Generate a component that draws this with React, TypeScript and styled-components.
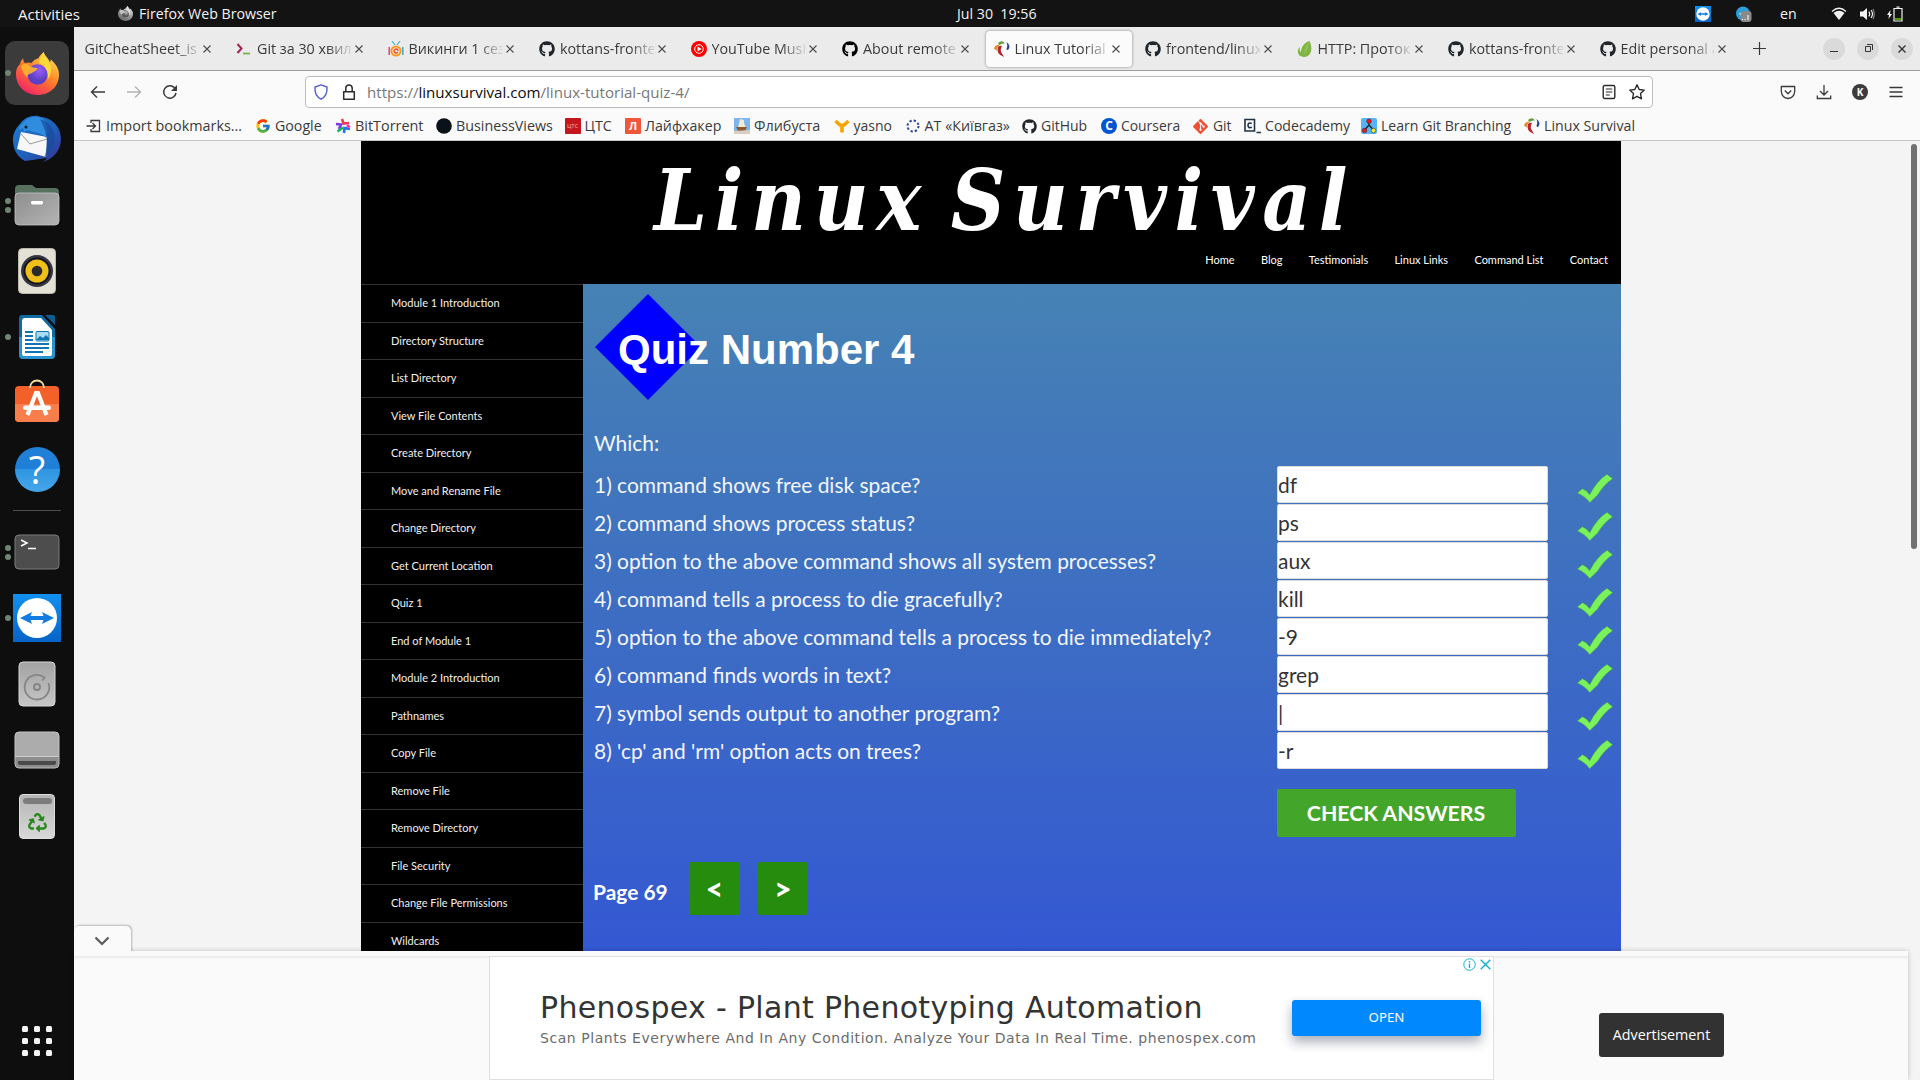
import React from 'react';
import styled, { createGlobalStyle, css } from 'styled-components';
import { FaGithub, FaGitAlt, FaRecycle } from 'react-icons/fa';
import { FcGoogle } from 'react-icons/fc';

const UI = `"Open Sans", "Noto Sans", sans-serif`;
const LATO = `Lato, "Noto Sans", sans-serif`;

const Global = createGlobalStyle`
  * { box-sizing: border-box; }
  html, body { margin: 0; padding: 0; background: #0e0e0e; overflow: hidden; }
  svg { display: block; flex: none; }
  button, input { font: inherit; }
`;

/* ---------- desktop shell ---------- */
const Screen = styled.div`
  width: 1920px;
  height: 1080px;
  display: flex;
  flex-direction: column;
  overflow: hidden;
  font-family: ${UI};
`;
const TopBar = styled.header`
  height: 27px;
  flex: none;
  display: flex;
  align-items: center;
  padding: 0 17px 0 18px;
  background: #131313;
  color: #f2f2f2;
  font-size: 14.2px;
  line-height: 26px;
  white-space: pre;
`;
const Activities = styled.span`
  width: 100px;
  font-size: 15px;
`;
const AppName = styled.span`
  width: 824px;
  padding-left: 6px;
`;
const Tray = styled.div`
  margin-left: auto;
  display: flex;
  align-items: center;
`;
const TrayItem = styled.span<{ $gap?: number; $w: number }>`
  margin-left: ${p => p.$gap ?? 0}px;
  width: ${p => p.$w}px;
`;
const Desktop = styled.div`
  flex: 1;
  min-height: 0;
  display: flex;
`;

/* ---------- dock ---------- */
const Dock = styled.nav`
  width: 74px;
  flex: none;
  background: #0e0e0e;
  display: flex;
  flex-direction: column;
  align-items: center;
  gap: 2px;
  padding: 14px 0 7px;
`;
const DockItem = styled.div<{ $active?: boolean }>`
  position: relative;
  width: 64px;
  height: 64px;
  flex: none;
  display: flex;
  align-items: center;
  justify-content: center;
  border-radius: 10px;
  background: ${p => (p.$active ? '#3b3b3b' : 'transparent')};
`;
const Dots = styled.span`
  position: absolute;
  left: 0;
  top: 0;
  height: 64px;
  display: flex;
  flex-direction: column;
  justify-content: center;
  gap: 3px;
`;
const Dot = styled.i`
  width: 6px;
  height: 6px;
  border-radius: 3px;
  background: #6f8573;
`;
const DockRule = styled.hr`
  width: 48px;
  height: 1px;
  flex: none;
  margin: 7px 0;
  border: 0;
  background: #4d4d4d;
`;
const AppsGrid = styled.div`
  margin: auto 0 17px;
  display: grid;
  grid-template-columns: repeat(3, 6px);
  gap: 6px;
`;
const AppsCell = styled.i`
  height: 6px;
  border-radius: 1.5px;
  background: #f4f4f4;
`;

/* ---------- browser chrome ---------- */
const Browser = styled.div`
  flex: 1;
  min-width: 0;
  display: flex;
  flex-direction: column;
  background: #fafafa;
  color: #3a3a3c;
`;
const TabStrip = styled.div`
  height: 44px;
  flex: none;
  display: flex;
  align-items: center;
  background: #ebebeb;
  border-bottom: 1px solid #9d9da0;
`;
const Tab = styled.div<{ $active?: boolean }>`
  width: 146.5px;
  height: 36px;
  margin: 0 2.5px;
  padding: 0 8px 0 8px;
  flex: none;
  display: flex;
  align-items: center;
  border-radius: 4px;
  ${p => p.$active && css`
    background: #fbfbfb;
    box-shadow: 0 0 3px rgba(0, 0, 0, 0.45);
  `}
`;
const TabIcon = styled.span`
  width: 21px;
  flex: none;
`;
const TabLabel = styled.span`
  flex: 1;
  min-width: 0;
  overflow: hidden;
  white-space: nowrap;
  font-size: 14.3px;
  line-height: 22px;
  mask-image: linear-gradient(to right, #000 calc(100% - 24px), rgba(0, 0, 0, 0.12));
`;
const TabClose = styled.span`
  width: 16px;
  flex: none;
  display: flex;
  justify-content: center;
`;
const NewTab = styled.span`
  margin-left: 12.5px;
`;
const WindowButtons = styled.div`
  margin-left: auto;
  padding-right: 7px;
  display: flex;
  gap: 12px;
`;
const WindowButton = styled.span`
  width: 22px;
  height: 22px;
  border-radius: 50%;
  background: #dadada;
  display: flex;
  align-items: center;
  justify-content: center;
`;
const NavBar = styled.div`
  height: 41px;
  flex: none;
  display: flex;
  align-items: center;
  padding: 0 6px;
`;
const Slot = styled.span<{ $w?: number }>`
  width: ${p => p.$w ?? 36}px;
  flex: none;
  display: flex;
  align-items: center;
  justify-content: center;
`;
const UrlBar = styled.div`
  width: 1348px;
  height: 32px;
  margin: 0 auto 0 117px;
  padding: 0 1px;
  display: flex;
  align-items: center;
  background: #fff;
  border: 1px solid #bcbcbe;
  border-radius: 4px;
`;
const Url = styled.span`
  flex: 1;
  padding-left: 4px;
  font-size: 15.1px;
  line-height: 24px;
  color: #77777a;
  b { font-weight: 400; color: #0c0c0d; }
`;
const Avatar = styled.span`
  width: 16px;
  height: 16px;
  border-radius: 8px;
  background: #3c3c3e;
  color: #fff;
  font: 700 10px/16px ${UI};
  text-align: center;
`;
const BookmarkBar = styled.div`
  height: 29px;
  flex: none;
  display: flex;
  align-items: center;
  padding-left: 12px;
  border-bottom: 1px solid #c6c6c8;
`;
const Bookmark = styled.span<{ $w: number; $fs?: number }>`
  width: ${p => p.$w}px;
  flex: none;
  display: flex;
  align-items: center;
  gap: 4px;
  font-size: ${p => p.$fs ?? 14.2}px;
  line-height: 22px;
  white-space: nowrap;
`;

/* ---------- viewport ---------- */
const Viewport = styled.div`
  flex: 1;
  min-height: 0;
  display: flex;
  background: #f4f4f4;
`;
const Column = styled.div`
  width: 1834px;
  display: flex;
  flex-direction: column;
`;
const ScrollTrack = styled.div`
  flex: 1;
  padding: 3px 3px 0;
`;
const ScrollThumb = styled.div`
  height: 405px;
  border-radius: 3px;
  background: #71716f;
`;
const Page = styled.div`
  height: 810px;
  width: 1260px;
  margin-left: 287px;
  overflow: hidden;
  display: flex;
  flex-direction: column;
`;
const SiteHeader = styled.div`
  height: 143px;
  flex: none;
  background: #000;
  color: #fff;
  padding-top: 18px;
`;
const SiteTitle = styled.h1`
  margin: 0 0 7px;
  padding-left: 293px;
  font: italic 700 84px/84px "DejaVu Serif Condensed", "DejaVu Serif", serif;
  font-stretch: condensed;
  letter-spacing: 7.6px;
  word-spacing: -12px;
  white-space: nowrap;
`;
const SiteNav = styled.div`
  display: flex;
  justify-content: flex-end;
  gap: 26.3px;
  padding-right: 13px;
  font: 400 11px/20px ${LATO};
`;
const SiteBody = styled.div`
  flex: 1;
  min-height: 0;
  display: flex;
`;
const SideMenu = styled.div`
  width: 222px;
  flex: none;
  overflow: hidden;
  background: #000;
  display: flex;
  flex-direction: column;
`;
const MenuItem = styled.a`
  height: 37.5px;
  flex: none;
  padding-left: 30px;
  border-top: 1px solid #333;
  color: #f0f0f0;
  font: 400 11px/35px ${LATO};
`;
const Quiz = styled.main`
  flex: 1;
  padding: 10px 0 0 12px;
  background: linear-gradient(#4682b4, #3458d2);
  color: #f3f6fb;
  font: 400 20.95px/28px ${LATO};
`;
const Heading = styled.div`
  display: grid;
  align-items: center;
  justify-items: start;
  > * { grid-area: 1 / 1; }
`;
const HeadingText = styled.h2`
  margin: 0;
  padding: 5px 0 0 23px;
  color: #fff;
  font: 700 42px/50px "Liberation Sans", Arial, sans-serif;
  z-index: 1;
`;
const Lead = styled.p`
  margin: 28.5px 0 9.5px -1px;
`;
const Question = styled.div`
  height: 38px;
  margin-left: -1px;
  display: grid;
  grid-template-columns: 683px 271px 36px;
  line-height: 37px;
  > svg { margin: 7.5px 0 0 29px; }
`;
const Answer = styled.input`
  width: 271px;
  height: 37px;
  padding: 0;
  border: 1px solid #dcdcdc;
  border-radius: 2px;
  background: #fff;
  color: #333;
  outline: 0;
`;
const CheckButton = styled.button`
  display: block;
  width: 239px;
  height: 48px;
  margin: 19px 0 25px 682px;
  padding: 0 1px 0 0;
  border: 0;
  border-radius: 2px;
  background: #43a52a;
  color: #fff;
  font: 700 21.3px/48px ${LATO};
`;
const Pager = styled.div`
  display: flex;
  align-items: center;
`;
const PageLabel = styled.span`
  width: 96px;
  padding-top: 6px;
  margin-left: -2px;
  color: #fff;
  font-weight: 700;
`;
const PageButton = styled.button<{ $w: number }>`
  width: ${p => p.$w}px;
  height: 53px;
  margin-right: 18px;
  padding: 0 0 1px;
  border: 0;
  border-radius: 2px;
  background: #268c0e;
  color: #fff;
  font: 900 30px/52px ${LATO};
`;

/* ---------- anchor ad ---------- */
const AdStrip = styled.div`
  position: relative;
  height: 129px;
  padding-top: 5px;
  background: #fafafa;
  box-shadow: 0 0 5px rgba(0, 0, 0, 0.22);
`;
const CollapseTab = styled.span`
  position: absolute;
  left: 0;
  top: -25px;
  width: 57px;
  height: 26px;
  display: flex;
  align-items: center;
  justify-content: center;
  padding: 4px 2px 0 0;
  background: #fafafa;
  border-radius: 5px 5px 0 0;
  box-shadow: 1px -1px 2px rgba(0, 0, 0, 0.25);
  clip-path: inset(-4px -5px 1px 0);
`;
const AdRow = styled.div`
  height: 124px;
  display: flex;
  border-top: 1px solid #ececec;
  box-shadow: inset 0 2px 2px -1px rgba(0, 0, 0, 0.06);
`;
const AdCard = styled.div`
  width: 1005px;
  height: 124px;
  margin: -1px 0 0 415px;
  flex: none;
  display: flex;
  background: #fff;
  border: 1px solid #dfe1e1;
`;
const AdCopy = styled.div`
  width: 802px;
  flex: none;
  padding: 33px 0 0 50px;
  white-space: nowrap;
  font-family: "DejaVu Sans", Verdana, sans-serif;
`;
const AdTitle = styled.div`
  font-size: 30px;
  line-height: 36px;
  letter-spacing: 0.31px;
  color: #333;
`;
const AdText = styled.div`
  margin-top: 2px;
  font-size: 14px;
  line-height: 20px;
  letter-spacing: 0.55px;
  color: #6c6c6c;
`;
const AdSide = styled.div`
  flex: 1;
  display: flex;
  flex-direction: column;
  align-items: flex-start;
`;
const AdMarks = styled.div`
  align-self: flex-end;
  display: flex;
  align-items: center;
  gap: 4px;
  padding: 1px 2px 0 0;
`;
const AdButton = styled.button`
  width: 189px;
  height: 36px;
  margin-top: 29px;
  padding: 0 0 2px;
  border: 0;
  border-radius: 3px;
  background: #08f;
  color: #fff;
  font: 400 13.3px/34px "Noto Sans", sans-serif;
  box-shadow: 0 6px 12px rgba(20, 30, 60, 0.36);
`;
const AdNotice = styled.span`
  width: 125px;
  height: 44px;
  margin: 56px 0 0 105px;
  border-radius: 3px;
  background: #323232;
  color: #fff;
  font-size: 14.3px;
  line-height: 43px;
  text-align: center;
`;

/* ---------- icons ---------- */
const Firefox = ({ size, mono = false }: { size: number; mono?: boolean }) => {
  const id = mono ? 'fm' : 'fc';
  const c = mono ? ['#eee', '#999', '#666', '#bbb', '#555'] : ['#ffe14a', '#ff7a2a', '#f0206a', '#9a5cff', '#5b3fc4'];
  return (
    <svg width={size} height={size} viewBox="0 0 42 42">
      <defs>
        <linearGradient id={id} x1=".85" y1=".05" x2=".25" y2="1">
          <stop offset="0" stopColor={c[0]} /><stop offset=".5" stopColor={c[1]} /><stop offset="1" stopColor={c[2]} />
        </linearGradient>
        <radialGradient id={id + 'r'} cx=".6" cy=".3"><stop offset="0" stopColor={c[3]} /><stop offset="1" stopColor={c[4]} /></radialGradient>
      </defs>
      <path fill={`url(#${id})`} d="M27 0c1 4 5 6 6 10 1-1 1-2 1-3 5 5 8 9 8 15 0 12-9 20-21 20S0 33 0 22c0-4 1-8 4-10 0-2 1-4 3-6 0 3 1 4 2 5 2-1 4-1 6 0 2-3 4-4 7-5 1-2 3-4 5-6z" />
      <circle cx="21" cy="22" r="10" fill={`url(#${id}r)`} />
      <path fill={mono ? '#ccc' : '#ffb52e'} d="M5 14c2-3 4-3 6-2 2 3 7 3 10 4-1 3-5 3-6 5-2 0-4 1-4 4-3-3-5-6-6-11z" opacity=".9" />
      <path fill={mono ? '#ddd' : '#ffd83a'} d="M27 0c1 5 6 8 7 15 1 5-1 9-3 12 1-9-3-14-8-16-1-4 2-7 4-11z" />
    </svg>
  );
};
const Thunderbird = () => (
  <svg width="48" height="48" viewBox="0 0 48 48">
    <defs><linearGradient id="tb" x1="0" y1="0" x2="1" y2="1"><stop offset="0" stopColor="#1d7fd6" /><stop offset=".6" stopColor="#1f5cb8" /><stop offset="1" stopColor="#3a2f8f" /></linearGradient></defs>
    <path fill="url(#tb)" d="M7 9C12 1 22-1 28 2c12 1 20 11 20 22 0 12-9 21-19 23 2-1 4-2 5-4L12 46C4 42 0 34 0 25c0-7 3-12 7-16z" />
    <path fill="#f7f7f7" d="M8 17l26 5-1 20L4 34z" />
    <path fill="none" stroke="#9a9a9a" d="M8 19l9 10 17-5" />
    <path fill="#2f8de0" d="M9 9c6-8 15-8 20-6 5 4 6 12 4 20-4-5-10-5-15-7-3-1-6-1-8 2 2-5 0-6-4-3 0-3 1-5 3-6z" />
    <path fill="#174a96" d="M27 4c9 3 15 10 15 20-2 9-5 15-11 19 4-10 5-22-4-39z" opacity=".65" />
    <circle cx="13" cy="12" r="1.6" fill="#123" />
  </svg>
);
const Files = () => (
  <svg width="46" height="42" viewBox="0 0 46 42">
    <defs><linearGradient id="fl" x1="0" y1="0" x2="1" y2="1"><stop offset="0" stopColor="#8e8e8e" /><stop offset="1" stopColor="#b4b4b4" /></linearGradient></defs>
    <path fill="#587060" d="M1 5q0-4 4-4h13l4 3h19q4 0 4 4v10H1z" />
    <rect x="1" y="9" width="44" height="32" rx="4" fill="url(#fl)" stroke="#c5c5c5" strokeWidth=".8" />
    <rect x="17" y="17" width="12" height="3.4" rx="1.4" fill="#fff" />
  </svg>
);
const Rhythmbox = () => (
  <svg width="38" height="46" viewBox="0 0 38 46">
    <rect x=".5" y=".5" width="37" height="45" rx="4" fill="#e3e0d6" stroke="#bdb9ac" />
    <circle cx="19" cy="23" r="16" fill="#35353f" /><circle cx="19" cy="23" r="13.500" fill="#15151c" />
    <circle cx="19" cy="23" r="11.500" fill="#f0bf18" /><circle cx="19" cy="23" r="5.300" fill="#2b2b2b" />
  </svg>
);
const Writer = () => (
  <svg width="38" height="46" viewBox="0 0 38 46">
    <path fill="#0c6ba1" d="M4 1h20l13 14v26q0 4-4 4H5q-4 0-4-4V4q0-3 3-3z" />
    <path fill="#2793cf" d="M1 23h36v18q0 4-4 4H5q-4 0-4-4z" />
    <path fill="#fff" d="M7 4h16l11 12v24q0 2-2 2H6q-2 0-2-2V7q0-3 3-3z" />
    <path fill="#0b5f93" d="M27 1h8q2 0 2 2v8z" />
    <path stroke="#0f76b3" strokeWidth="2" d="M7 18h8M7 22h8M7 26h8M7 30h24M7 34h24M7 38h18" />
    <rect x="18" y="17.500" width="13" height="9.500" rx="1" fill="#a9dcf2" stroke="#0f76b3" />
    <path fill="#0f76b3" d="M18 26l4-4 3 2 3-3 3 3v2z" />
  </svg>
);
const Software = () => (
  <svg width="46" height="48" viewBox="0 0 46 48">
    <rect x="1" y="7" width="44" height="36" rx="4" fill="#f4602a" />
    <path fill="#f87e4c" d="M1 25h44v14q0 4-4 4H5q-4 0-4-4z" />
    <path fill="none" stroke="#f7dba4" strokeWidth="1.800" d="M16 9c0-10 14-10 14 0" />
    <path fill="none" stroke="#fff" strokeWidth="4.200" d="M13.500 36L22 14h2l8.500 22" />
    <rect x="9" y="26.500" width="28" height="4.500" rx="2.200" fill="#fff" />
  </svg>
);
const HelpBadge = styled.span`
  width: 45px;
  height: 45px;
  border-radius: 50%;
  background: linear-gradient(#2080d8 0 50%, #2f95e2 50%, #46a6ea);
  color: #fff;
  font: 400 38px/44px ${UI};
  text-align: center;
`;
const TerminalIcon = () => (
  <svg width="46" height="37" viewBox="0 0 46 37">
    <rect x="1" y="1" width="44" height="34" rx="4" fill="#4d4d4d" stroke="#7d7d7d" />
    <path fill="none" stroke="#fff" strokeWidth="1.500" d="M7 6l6 3-6 3M14 14.500h8" />
  </svg>
);
const TeamViewer = ({ size }: { size: number }) => (
  <svg width={size} height={size} viewBox="0 0 48 48">
    <defs><linearGradient id={'tv' + size} x2="0" y2="1"><stop stopColor="#1191f0" /><stop offset="1" stopColor="#0663c7" /></linearGradient></defs>
    <rect width="48" height="48" fill={`url(#tv${size})`} />
    <circle cx="24" cy="24" r="20" fill="#fff" />
    <path fill="#0f7ee0" d="M7 24l12-6-1.500 4h13L29 18l12 6-12 6 1.500-4h-13L19 30z" />
  </svg>
);
const HardDisk = () => (
  <svg width="38" height="46" viewBox="0 0 38 46">
    <defs><linearGradient id="hd" x2="0" y2="1"><stop stopColor="#a2a2a2" /><stop offset="1" stopColor="#c6c6c6" /></linearGradient></defs>
    <rect x="1" y="1" width="36" height="44" rx="4" fill="url(#hd)" stroke="#d5d5d5" />
    <path fill="none" stroke="#858585" strokeWidth="1.800" d="M30.500 22a12.300 12.300 0 1 1-4-5.500l-2 3" />
    <circle cx="19" cy="26" r="3" fill="none" stroke="#858585" strokeWidth="2" />
  </svg>
);
const Drive = () => (
  <svg width="46" height="38" viewBox="0 0 46 38">
    <rect x="1" y="1" width="44" height="36" rx="4" fill="#acacac" stroke="#c4c4c4" />
    <path fill="#8d8d8d" d="M1.500 26h43v7q0 3.500-3.500 3.500H5Q1.500 36.500 1.500 33z" />
    <path stroke="#ccc" d="M1.500 25.500h43" />
    <path fill="#4a4a4a" d="M4 30h38v2q0 2-2 2H6q-2 0-2-2z" />
  </svg>
);
const TrashCan = styled.span`
  width: 36px;
  height: 45px;
  border-radius: 4px;
  border: 1px solid #ddd;
  background: linear-gradient(#b5b5b5, #d8d8d8);
  display: flex;
  flex-direction: column;
  align-items: center;
  gap: 9px;
  padding-top: 3px;
  color: #26891a;
`;
const TrashSlot = styled.i`
  width: 29px;
  height: 6px;
  border-radius: 3px;
  background: #7c7c7c;
`;
const Telegram = () => (
  <svg width="16" height="16" viewBox="0 0 16 16">
    <circle cx="7" cy="7.500" r="7" fill="#2a9fd8" /><path fill="#fff" d="M3 7.500l5-2-2 5z" />
    <rect x="4.500" y="5" width="11" height="11" rx="3" fill="#8a8a8a" />
    <path stroke="#fff" d="M6 13.500h1M8.500 13.500h1M12 9v5" />
  </svg>
);
const Wifi = () => (
  <svg width="16" height="14" viewBox="0 0 16 14">
    <path fill="none" stroke="#f2f2f2" strokeWidth="1.200" d="M1 4.500Q8-2 15 4.500" />
    <path fill="#f2f2f2" d="M2.500 6Q8 1.500 13.500 6L8 13z" />
  </svg>
);
const Volume = () => (
  <svg width="16" height="14" viewBox="0 0 16 14">
    <path fill="#f2f2f2" d="M1 4.500h3L8 1v12L4 9.500H1z" />
    <path fill="none" stroke="#f2f2f2" strokeWidth="1.200" d="M9.800 4.500q1.800 2.500 0 5M12 3q3 4 0 8" />
    <path fill="none" stroke="#888" strokeWidth="1.200" d="M14 2q2.500 5 0 10" />
  </svg>
);
const Battery = () => (
  <svg width="16" height="16" viewBox="0 0 16 16">
    <path fill="#f2f2f2" d="M3.500 4L0 9h2l-.5 4L5 8H3z" />
    <path fill="none" stroke="#f2f2f2" strokeWidth="1.200" d="M7 2.500h8v12.500H7zM9.500 1.200h3" />
    <path fill="#4e9a06" d="M8 12h6v2.200H8z" />
  </svg>
);
const Cross = ({ size = 8, color = '#4a4a4c', w = 1.1 }: { size?: number; color?: string; w?: number }) => (
  <svg width={size} height={size} viewBox="0 0 8 8"><path stroke={color} strokeWidth={w} d="M.5.5l7 7M7.500.5l-7 7" /></svg>
);
const Prompt = () => (
  <svg width="16" height="16" viewBox="0 0 16 16"><path fill="none" stroke="#a5244c" strokeWidth="2" d="M1.500 3l4 4.500-4 4.500" /><path stroke="#7bb342" strokeWidth="1.800" d="M7 12.500h7" /></svg>
);
const Viking = () => (
  <svg width="16" height="16" viewBox="0 0 16 16">
    <path stroke="#35b7d8" strokeWidth="1.200" d="M4 0l3 4M12 0L9 4" />
    <path fill="none" stroke="#e83e8c" strokeWidth="1.500" d="M1.200 6v8" /><path fill="none" stroke="#35a7e0" strokeWidth="1.500" d="M14.800 6v8" />
    <circle cx="8" cy="10" r="4.600" fill="none" stroke="#f79a1c" strokeWidth="2" />
    <path fill="none" stroke="#f0501f" strokeWidth="1.400" d="M10 11q-2 2-3.500 0t1.500-3q2 0 2 2" />
  </svg>
);
const YouTubeMusic = () => (
  <svg width="16" height="16" viewBox="0 0 16 16"><circle cx="8" cy="8" r="8" fill="#f00" /><circle cx="8" cy="8" r="4.300" fill="none" stroke="#fff" /><path fill="#fff" d="M6.500 5.500L10.700 8l-4.200 2.500z" /></svg>
);
const Palm = () => (
  <svg width="16" height="16" viewBox="0 0 16 16">
    <path fill="#e08a2c" d="M0 7.500Q1 3.500 6 3.500 3 5.500 2.500 9.500z" />
    <path fill="#5f9f3a" d="M4 2Q8-1.500 11 2.500 7 2 5.500 4z" />
    <path fill="#b5272d" d="M4 6Q6 4 8 5 5.500 9 8 12.500L10 16Q1.500 13 4 6z" />
    <path fill="#26418f" d="M12.500 1q5 3.500 1.500 8-1.500 0-1.500-1.500Q14 5 12.500 1z" />
  </svg>
);
const Leaf = () => (
  <svg width="16" height="16" viewBox="0 0 16 16"><path fill="#7fb541" d="M12.500 0C15 5 15 11 12 14c-3 3-8 2-10 0-2-3-1-7 1-8-1 2 0 4 1 5C4 6 8 1 12.500 0z" /><path fill="#a3cf6a" d="M12 1C8 5 7 9 7.500 13 10 9 12 6 12 1z" opacity=".5" /></svg>
);
const Import = () => (
  <svg width="16" height="16" viewBox="0 0 16 16"><path fill="none" stroke="#3a3a3c" strokeWidth="1.300" d="M5 5V2.500h8.500v11H5V11M0.500 8h8.500M6.500 5L9.500 8l-3 3" /></svg>
);
const BitTorrent = () => (
  <svg width="16" height="16" viewBox="0 0 16 16"><g strokeWidth="2.600" fill="none"><path stroke="#f03a4b" d="M7 1l1.500 4.500L14 5" /><path stroke="#7a35e8" d="M1 6l5 .5L4 11" /><path stroke="#16b35a" d="M2.500 13.500L8 9.500" /><path stroke="#2a6ff0" d="M9 15l.5-5L15 11" /><path stroke="#f03aa0" d="M12 7l2.500 2.500" /></g></svg>
);
const Disc = () => <svg width="16" height="16"><circle cx="8" cy="8" r="7.800" fill="#0a1118" /></svg>;
const Badge = styled.span<{ $bg: string; $fs: number; $fg?: string; $round?: boolean; $light?: boolean }>`
  width: 16px;
  height: 16px;
  flex: none;
  border-radius: ${p => (p.$round ? 8 : 1)}px;
  background: ${p => p.$bg};
  color: ${p => p.$fg ?? '#fff'};
  font: ${p => (p.$light ? 400 : 700)} ${p => p.$fs}px/16px ${UI};
  text-align: center;
`;
const Ship = () => (
  <svg width="16" height="16" viewBox="0 0 16 16"><path fill="#7db6ea" d="M0 0h16v16H0z" /><path fill="#f3ead2" d="M6 1l4 1v3l2 5H4z" /><path fill="#8a5a32" d="M2 9h11l-2 4H4z" /><path fill="#d9cfc0" d="M0 13l16-1v4H0z" /></svg>
);
const Yasno = () => <svg width="16" height="16" viewBox="0 0 16 16"><path fill="none" stroke="#f7a600" strokeWidth="3.600" d="M1.500 3l4 3.500L8 8v6.500V8l2.500-1.500 4-3.500" /></svg>;
const Ring = () => <svg width="16" height="16" viewBox="0 0 16 16"><circle cx="8" cy="8" r="5.500" fill="none" stroke="#2f45a8" strokeWidth="2" strokeDasharray="2.300 2.020" /></svg>;
const Codecademy = () => (
  <svg width="17" height="16" viewBox="0 0 17 16"><path fill="none" stroke="#1f3347" strokeWidth="1.600" d="M1 1.500h9.500V13H1zM12.500 14.500H17M7.800 5.500Q4 4 4 7.300t3.800 1.900" /></svg>
);
const Branching = () => (
  <svg width="16" height="16" viewBox="0 0 16 16"><rect width="16" height="16" rx="2" fill="#55b4f7" /><path stroke="#222" strokeWidth="1.300" d="M8 4v4M8 7l-4.500 5M8 7l4.500 5" /><circle cx="8" cy="3.200" r="2.300" fill="#f5141a" stroke="#222" strokeWidth=".5" /><circle cx="3.500" cy="12.500" r="2.300" fill="#f5141a" stroke="#222" strokeWidth=".5" /><circle cx="12.500" cy="12.500" r="2.300" fill="#f6ec2b" stroke="#222" strokeWidth=".5" /></svg>
);
const Arrow = ({ back = false }: { back?: boolean }) => (
  <svg width="16" height="14" viewBox="0 0 16 14"><path fill="none" stroke={back ? '#3a3a3c' : '#b3b3b5'} strokeWidth="1.400" d={back ? 'M15 7H1.500M7 1.500L1.500 7 7 12.500' : 'M1 7h13.500M9 1.500L14.500 7 9 12.500'} /></svg>
);
const Reload = () => (
  <svg width="16" height="16" viewBox="0 0 16 16"><path fill="none" stroke="#3a3a3c" strokeWidth="1.500" d="M14 9A6.200 6.200 0 1 1 12.500 3.800L14 5.500" /><path fill="#3a3a3c" d="M15 1v6H9z" /></svg>
);
const Shield = () => <svg width="16" height="16" viewBox="0 0 16 16"><path fill="none" stroke="#4f5bd0" strokeWidth="1.400" d="M8 .9l6 2.200c.4 5-.8 9.500-6 12C2.800 12.600 1.600 8.100 2 3.100z" /></svg>;
const Lock = () => <svg width="14" height="16" viewBox="0 0 14 16"><path fill="none" stroke="#2a2a2c" strokeWidth="1.500" d="M1.700 7.700h10.600v7.500H1.700zM3.800 7.500V4q.3-3 3.200-3t3.200 3v3.500" strokeLinejoin="round" /></svg>;
const Reader = () => <svg width="14" height="16" viewBox="0 0 14 16"><rect x="1.200" y="1.500" width="11.600" height="13" rx="1.500" fill="none" stroke="#2a2a2c" strokeWidth="1.400" /><path stroke="#2a2a2c" strokeWidth="1.200" d="M3.800 5h6.400M3.800 8h6.400M3.800 11h4" /></svg>;
const Star = () => <svg width="18" height="18" viewBox="0 0 18 18"><path fill="none" stroke="#2a2a2c" strokeWidth="1.400" strokeLinejoin="round" d="M9 1.800l2.200 4.700 5.100.6-3.800 3.500 1 5.200L9 13.300l-4.500 2.500 1-5.200L1.700 7.100l5.100-.6z" /></svg>;
const Pocket = () => <svg width="16" height="16" viewBox="0 0 16 16"><path fill="none" stroke="#3a3a3c" strokeWidth="1.300" strokeLinejoin="round" d="M1.300 2.500h13.400v5Q14 14 8 14.500 2 14 1.300 7.500zM4.800 6.500L8 9.700l3.200-3.200" /></svg>;
const Download = () => <svg width="16" height="16" viewBox="0 0 16 16"><path fill="none" stroke="#3a3a3c" strokeWidth="1.300" d="M8 1v9.500M4 7l4 4 4-4M1.300 11.500v3h13.400v-3" /></svg>;
const Burger = () => <svg width="14" height="12" viewBox="0 0 14 12"><path stroke="#3a3a3c" strokeWidth="1.300" d="M.5 1.500h13M.5 6h13M.5 10.500h13" /></svg>;
const Diamond = () => <svg width="106" height="106"><path fill="#00f" d="M53 0l53 53-53 53L0 53z" /></svg>;
const Tick = () => (
  <svg width="36" height="29" viewBox="0 0 108 87"><path fill="#7af25b" stroke="#4a9a48" strokeWidth="1.500" d="M1 57l15-13q14 5 22 18Q60 20 90 1l17 13Q80 32 62 63L38 86Q26 68 1 57z" /></svg>
);
const Chevron = () => <svg width="16" height="10" viewBox="0 0 16 10"><path fill="none" stroke="#5a5a5a" strokeWidth="2.200" d="M1.500 1.500L8 8l6.500-6.500" /></svg>;
const AdInfo = () => <svg width="13" height="13" viewBox="0 0 13 13"><circle cx="6.500" cy="6.500" r="5.700" fill="none" stroke="#13b0d0" /><path stroke="#13b0d0" strokeWidth="1.400" d="M6.500 5.500v4.500M6.500 3v1.500" /></svg>;

/* ---------- data ---------- */
const dark = '#20252a';
const tabs: { label: string; icon?: React.ReactNode; active?: boolean }[] = [
  { label: 'GitCheatSheet_is' },
  { label: 'Git за 30 хвил', icon: <Prompt /> },
  { label: 'Викинги 1 сез', icon: <Viking /> },
  { label: 'kottans-fronte', icon: <FaGithub size={16} color={dark} /> },
  { label: 'YouTube Musi', icon: <YouTubeMusic /> },
  { label: 'About remote', icon: <FaGithub size={16} color="#000" /> },
  { label: 'Linux Tutorial', icon: <Palm />, active: true },
  { label: 'frontend/linux', icon: <FaGithub size={16} color={dark} /> },
  { label: 'HTTP: Протоко', icon: <Leaf /> },
  { label: 'kottans-fronte', icon: <FaGithub size={16} color={dark} /> },
  { label: 'Edit personal a', icon: <FaGithub size={16} color={dark} /> },
];
const bookmarks: [string, number, React.ReactNode, number?][] = [
  ['Import bookmarks…', 169, <Import />, 14.4],
  ['Google', 80, <FcGoogle size={16} />],
  ['BitTorrent', 101, <BitTorrent />, 14.4],
  ['BusinessViews', 128.500, <Disc />, 14.3],
  ['ЦТС', 60.500, <Badge $bg="#c4161c" $fg="#f3a5a0" $fs={7} $light>цтс</Badge>],
  ['Лайфхакер', 109, <Badge $bg="#f0563a" $fs={11}>Л</Badge>],
  ['Флибуста', 99.500, <Ship />, 14.4],
  ['yasno', 71, <Yasno />, 14],
  ['АТ «Київгаз»', 117.500, <Ring />, 14.3],
  ['GitHub', 79, <FaGithub size={15} color={dark} />, 14],
  ['Coursera', 91, <Badge $bg="#0056d2" $fs={12} $round>C</Badge>, 13.9],
  ['Git', 52, <FaGitAlt size={17} color="#f05133" />, 13.9],
  ['Codecademy', 117, <Codecademy />, 14.1],
  ['Learn Git Branching', 163, <Branching />, 14.1],
  ['Linux Survival', 120, <Palm />],
];
const menu = [
  'Module 1 Introduction', 'Directory Structure', 'List Directory', 'View File Contents', 'Create Directory',
  'Move and Rename File', 'Change Directory', 'Get Current Location', 'Quiz 1', 'End of Module 1',
  'Module 2 Introduction', 'Pathnames', 'Copy File', 'Remove File', 'Remove Directory', 'File Security',
  'Change File Permissions', 'Wildcards',
];
const questions: [string, string][] = [
  ['1) command shows free disk space?', 'df'],
  ['2) command shows process status?', 'ps'],
  ['3) option to the above command shows all system processes?', 'aux'],
  ['4) command tells a process to die gracefully?', 'kill'],
  ['5) option to the above command tells a process to die immediately?', '-9'],
  ['6) command finds words in text?', 'grep'],
  ['7) symbol sends output to another program?', '|'],
  ["8) 'cp' and 'rm' option acts on trees?", '-r'],
];
const launchers: { icon: React.ReactNode; dots?: number; active?: boolean; rule?: boolean }[] = [
  { icon: <Firefox size={43} />, dots: 1, active: true },
  { icon: <Thunderbird /> },
  { icon: <Files />, dots: 2 },
  { icon: <Rhythmbox /> },
  { icon: <Writer />, dots: 1 },
  { icon: <Software /> },
  { icon: <HelpBadge>?</HelpBadge>, rule: true },
  { icon: <TerminalIcon />, dots: 2 },
  { icon: <TeamViewer size={48} />, dots: 1 },
  { icon: <HardDisk /> },
  { icon: <Drive /> },
  { icon: <TrashCan><TrashSlot /><FaRecycle size={19} /></TrashCan> },
];

export default function App() {
  return (
    <Screen>
      <Global />
      <TopBar>
        <Activities>Activities</Activities>
        <Firefox size={15} mono />
        <AppName>Firefox Web Browser</AppName>
        <span>Jul 30  19:56</span>
        <Tray>
          <TrayItem $w={16}><TeamViewer size={16} /></TrayItem>
          <TrayItem $w={16} $gap={25}><Telegram /></TrayItem>
          <TrayItem $w={18} $gap={28}>en</TrayItem>
          <TrayItem $w={16} $gap={33}><Wifi /></TrayItem>
          <TrayItem $w={16} $gap={12}><Volume /></TrayItem>
          <TrayItem $w={16} $gap={12}><Battery /></TrayItem>
        </Tray>
      </TopBar>
      <Desktop>
        <Dock>
          {launchers.map((l, i) => (
            <React.Fragment key={i}>
              <DockItem $active={l.active}>
                {l.dots && <Dots>{Array.from({ length: l.dots }, (_, k) => <Dot key={k} />)}</Dots>}
                {l.icon}
              </DockItem>
              {l.rule && <DockRule />}
            </React.Fragment>
          ))}
          <AppsGrid>{Array.from({ length: 9 }, (_, k) => <AppsCell key={k} />)}</AppsGrid>
        </Dock>
        <Browser>
          <TabStrip>
            {tabs.map((t, i) => (
              <Tab key={i} $active={t.active}>
                {t.icon && <TabIcon>{t.icon}</TabIcon>}
                <TabLabel>{t.label}</TabLabel>
                <TabClose><Cross /></TabClose>
              </Tab>
            ))}
            <NewTab><svg width="13" height="13"><path stroke="#3a3a3c" strokeWidth="1.200" d="M6.500 0v13M0 6.500h13" /></svg></NewTab>
            <WindowButtons>
              <WindowButton><svg width="8" height="8"><path stroke="#333" d="M0 6.500h8" /></svg></WindowButton>
              <WindowButton><svg width="9" height="9"><path fill="none" stroke="#333" d="M1.500 2.500h5v5h-5zM3 .5h5.500V6" /></svg></WindowButton>
              <WindowButton><Cross size={8} color="#333" w={1.4} /></WindowButton>
            </WindowButtons>
          </TabStrip>
          <NavBar>
            <Slot><Arrow back /></Slot>
            <Slot><Arrow /></Slot>
            <Slot><Reload /></Slot>
            <UrlBar>
              <Slot $w={28}><Shield /></Slot>
              <Slot $w={28}><Lock /></Slot>
              <Url>https://<b>linuxsurvival.com</b>/linux-tutorial-quiz-4/</Url>
              <Slot $w={28}><Reader /></Slot>
              <Slot $w={28}><Star /></Slot>
            </UrlBar>
            <Slot><Pocket /></Slot>
            <Slot><Download /></Slot>
            <Slot><Avatar>K</Avatar></Slot>
            <Slot><Burger /></Slot>
          </NavBar>
          <BookmarkBar>
            {bookmarks.map(([label, w, icon, fs]) => <Bookmark key={label} $w={w} $fs={fs}>{icon}{label}</Bookmark>)}
          </BookmarkBar>
          <Viewport>
            <Column>
              <Page>
                <SiteHeader>
                  <SiteTitle>Linux Survival</SiteTitle>
                  <SiteNav>
                    {['Home', 'Blog', 'Testimonials', 'Linux Links', 'Command List', 'Contact'].map(n => <span key={n}>{n}</span>)}
                  </SiteNav>
                </SiteHeader>
                <SiteBody>
                  <SideMenu>{menu.map(m => <MenuItem key={m}>{m}</MenuItem>)}</SideMenu>
                  <Quiz>
                    <Heading>
                      <Diamond />
                      <HeadingText>Quiz Number 4</HeadingText>
                    </Heading>
                    <Lead>Which:</Lead>
                    {questions.map(([q, a]) => (
                      <Question key={q}>
                        <span>{q}</span>
                        <Answer defaultValue={a} />
                        <Tick />
                      </Question>
                    ))}
                    <CheckButton>CHECK ANSWERS</CheckButton>
                    <Pager>
                      <PageLabel>Page 69</PageLabel>
                      <PageButton $w={51}>&lt;</PageButton>
                      <PageButton $w={50}>&gt;</PageButton>
                    </Pager>
                  </Quiz>
                </SiteBody>
              </Page>
              <AdStrip>
                <CollapseTab><Chevron /></CollapseTab>
                <AdRow>
                  <AdCard>
                    <AdCopy>
                      <AdTitle>Phenospex - Plant Phenotyping Automation</AdTitle>
                      <AdText>Scan Plants Everywhere And In Any Condition. Analyze Your Data In Real Time. phenospex.com</AdText>
                    </AdCopy>
                    <AdSide>
                      <AdMarks><AdInfo /><Cross size={11} color="#13b0d0" w={1} /></AdMarks>
                      <AdButton>OPEN</AdButton>
                    </AdSide>
                  </AdCard>
                  <AdNotice>Advertisement</AdNotice>
                </AdRow>
              </AdStrip>
            </Column>
            <ScrollTrack><ScrollThumb /></ScrollTrack>
          </Viewport>
        </Browser>
      </Desktop>
    </Screen>
  );
}
